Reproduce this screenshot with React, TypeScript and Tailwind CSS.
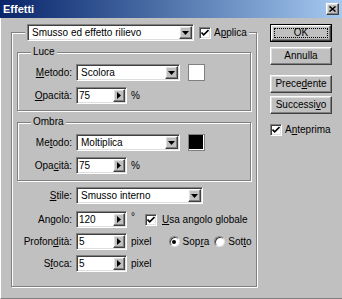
import type { ReactNode } from 'react';

const raised =
  'bg-[#c0c0c0] border border-t-white border-l-white border-r-[#404040] border-b-[#404040] shadow-[inset_-1px_-1px_0_#808080,inset_1px_1px_0_#dfdfdf]';
const sunken =
  'bg-white border border-t-[#808080] border-l-[#808080] border-r-white border-b-white shadow-[inset_1px_1px_0_#404040,inset_-1px_-1px_0_#dfdfdf]';

function U({ children }: { children: ReactNode }) {
  return <span className="underline underline-offset-[1px] decoration-1">{children}</span>;
}

function DownArrow() {
  return (
    <span className={`w-[13px] h-full flex items-center justify-center ${raised}`}>
      <svg width="7" height="4" viewBox="0 0 7 4">
        <path d="M0 0h7L3.5 4z" fill="#000" />
      </svg>
    </span>
  );
}

function Combo({ value, className }: { value: string; className: string }) {
  return (
    <div className={`${className} h-[17px] flex items-center p-[1px] ${sunken}`}>
      <span className="flex-1 pl-[3px] leading-none whitespace-nowrap overflow-hidden">{value}</span>
      <DownArrow />
    </div>
  );
}

function Spin({ value }: { value: string }) {
  return (
    <div className={`w-[51px] h-[17px] flex items-center p-[1px] shrink-0 ${sunken}`}>
      <span className="flex-1 pl-[1px] leading-none">{value}</span>
      <span className={`w-[12px] h-full flex items-center justify-center ${raised}`}>
        <svg width="4" height="7" viewBox="0 0 4 7">
          <path d="M0 0v7L4 3.5z" fill="#000" />
        </svg>
      </span>
    </div>
  );
}

function Check() {
  return (
    <span className={`w-[12px] h-[12px] flex items-center justify-center shrink-0 ${sunken}`}>
      <svg width="8" height="8" viewBox="0 0 8 8">
        <path d="M0.5 3.5l2.2 2.3L7.5 1" stroke="#000" strokeWidth="1.6" fill="none" />
      </svg>
    </span>
  );
}

function Radio({ on }: { on?: boolean }) {
  return (
    <span className="w-[11px] h-[11px] rounded-full bg-white border border-t-[#808080] border-l-[#808080] border-r-[#e0e0e0] border-b-[#e0e0e0] shadow-[inset_1px_1px_0_#404040] flex items-center justify-center shrink-0">
      {on && <span className="w-[4px] h-[4px] rounded-full bg-black" />}
    </span>
  );
}

function Row({ label, w, className = '', children }: { label: ReactNode; w: string; className?: string; children: ReactNode }) {
  return (
    <div className={`flex items-center h-[17px] whitespace-nowrap ${className}`}>
      <span className={`${w} shrink-0 text-right pr-[4px]`}>{label}</span>
      {children}
    </div>
  );
}

function Group({ title, swatch, m, o }: { title: string; swatch: string; m: ReactNode; o: ReactNode }) {
  return (
    <fieldset className="min-w-0 border border-[#808080] shadow-[inset_1px_1px_0_#fff,1px_1px_0_#fff] pt-[6px] pb-[6px]">
      <legend className="ml-[13px] px-[2px] bg-[#c0c0c0] leading-[12px]">{title}</legend>
      <Row label={m} w="w-[58px]">
        <Combo value={title === 'Luce' ? 'Scolora' : 'Moltiplica'} className="w-[104px]" />
        <span className={`ml-[8px] w-[17px] h-[17px] border border-[#808080] shadow-[inset_-1px_-1px_0_#fff] ${swatch}`} />
      </Row>
      <Row label={o} w="w-[58px]" className="mt-[6px]">
        <Spin value="75" />
        <span className="ml-[4px]">%</span>
      </Row>
    </fieldset>
  );
}

export default function App() {
  return (
    <div className="w-[342px] h-[299px] bg-[#c0c0c0] flex flex-col text-[10px] text-black font-['Liberation_Sans',Arial,sans-serif] leading-[12px] overflow-hidden">
      <div className="h-[18px] shrink-0 flex items-center justify-between pl-[3px] pr-[3px] bg-gradient-to-r from-[#0a246a] to-[#a6caf0]">
        <span className="text-white font-bold text-[11px] leading-none">Effetti</span>
        <span className={`w-[13px] h-[12px] flex items-center justify-center ${raised}`}>
          <svg width="7" height="6" viewBox="0 0 7 6">
            <path d="M0.5 0.5l6 5M6.5 0.5l-6 5" stroke="#000" strokeWidth="1.5" />
          </svg>
        </span>
      </div>

      <div className="flex-1 flex pt-[6px] border-l border-l-white border-b border-b-[#808080] shadow-[0_1px_0_#404040]">
        <fieldset className="ml-[10px] w-[246px] min-w-0 shrink-0 h-[263px] border border-[#808080] shadow-[inset_1px_1px_0_#fff,1px_1px_0_#fff] px-[5px] pt-[5px]">
          <legend className="ml-[8px] px-[2px] bg-[#c0c0c0]">
            <div className="flex items-center">
              <Combo value="Smusso ed effetto rilievo" className="w-[167px]" />
              <span className="ml-[5px]"><Check /></span>
              <span className="ml-[3px]">A<U>p</U>plica</span>
            </div>
          </legend>

          <Group
            title="Luce"
            swatch="bg-white"
            m={<><U>M</U>etodo:</>}
            o={<><U>O</U>pacità:</>}
          />
          <div className="mt-[5px]">
            <Group
              title="Ombra"
              swatch="bg-black"
              m={<>Me<U>t</U>odo:</>}
              o={<>Opa<U>c</U>ità:</>}
            />
          </div>

          <Row label={<><U>S</U>tile:</>} w="w-[59px]" className="mt-[6px]">
            <Combo value="Smusso interno" className="w-[127px]" />
          </Row>
          <Row label="Angolo:" w="w-[59px]" className="mt-[7px]">
            <Spin value="120" />
            <span className="ml-[4px] -mt-[6px]">°</span>
            <span className="ml-[10px]"><Check /></span>
            <span className="ml-[5px]"><U>U</U>sa angolo globale</span>
          </Row>
          <Row label={<>Profon<U>d</U>ità:</>} w="w-[59px]" className="mt-[5px]">
            <Spin value="5" />
            <span className="ml-[4px]">pixel</span>
            <span className="ml-[17px]"><Radio on /></span>
            <span className="ml-[3px]">Sop<U>r</U>a</span>
            <span className="ml-[5px]"><Radio /></span>
            <span className="ml-[3px]">Sot<U>t</U>o</span>
          </Row>
          <Row label={<>S<U>f</U>oca:</>} w="w-[59px]" className="mt-[5px]">
            <Spin value="5" />
            <span className="ml-[4px]">pixel</span>
          </Row>
        </fieldset>

        <div className="ml-[13px] w-[62px] flex flex-col">
          <div className="h-[18px] border border-black flex">
            <div className={`flex-1 flex items-center justify-center p-[2px] ${raised}`}>
              <span className="w-full h-full flex items-center justify-center border border-dotted border-black">OK</span>
            </div>
          </div>
          <div className={`mt-[5px] h-[18px] flex items-center justify-center ${raised}`}>Annulla</div>
          <div className={`mt-[10px] h-[18px] flex items-center justify-center ${raised}`}>Prece<U>d</U>ente</div>
          <div className={`mt-[3px] h-[18px] flex items-center justify-center ${raised}`}>Successi<U>v</U>o</div>
          <div className="mt-[10px] flex items-center">
            <Check />
            <span className="ml-[3px]">A<U>n</U>teprima</span>
          </div>
        </div>
      </div>
    </div>
  );
}
